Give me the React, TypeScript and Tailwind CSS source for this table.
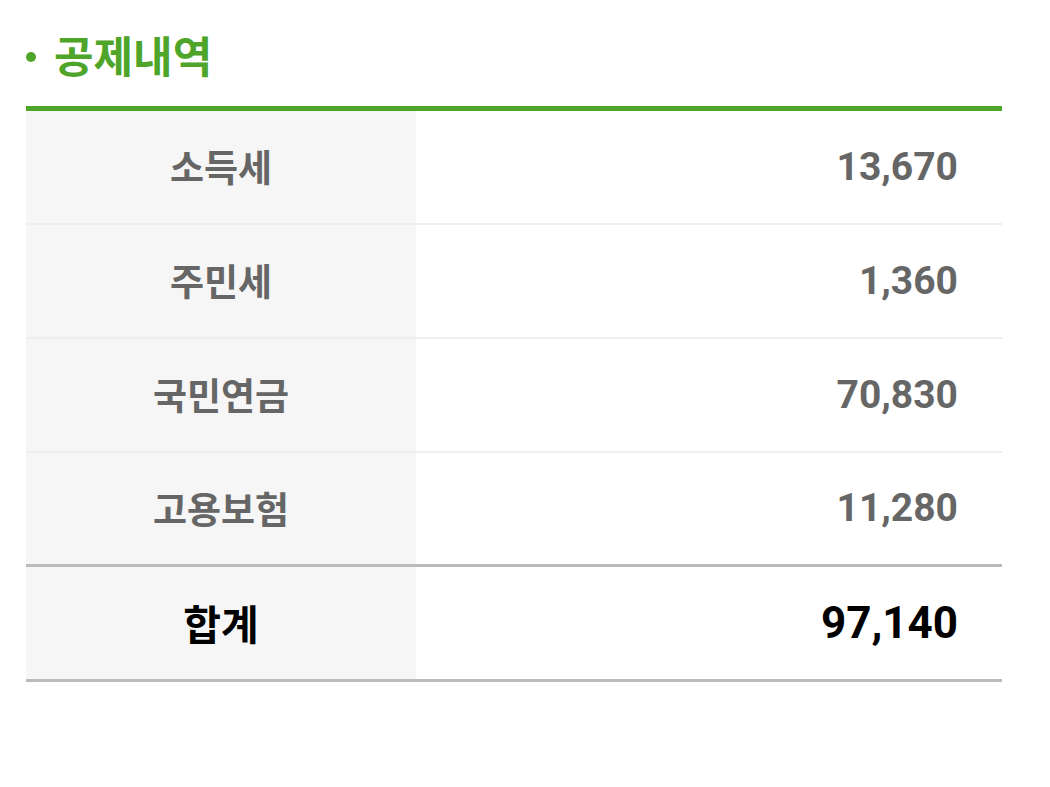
import React from "react";

const rows = [
  { label: "소득세", value: "13,670" },
  { label: "주민세", value: "1,360" },
  { label: "국민연금", value: "70,830" },
  { label: "고용보험", value: "11,280" },
];

const num = { fontFamily: 'Roboto, "Noto Sans", sans-serif' };

export default function App() {
  return (
    <div
      className="w-[1050px] h-[787px] bg-white"
      style={{ fontFamily: '"Noto Sans CJK KR", "Noto Sans", sans-serif' }}
    >
      <div className="pl-[26px] pr-[48px] pt-[26px]">
        <div className="flex items-center h-[56px]">
          <span className="w-[10px] h-[10px] rounded-full bg-[#4ea52a] mr-[18px] mt-[6px]" />
          <span className="text-[43px] font-bold text-[#4ea52a] leading-none">공제내역</span>
        </div>
        <div className="mt-[24px] border-t-[5px] border-[#4ea52a]">
          {rows.map((r, i) => (
            <div
              key={r.label}
              className={`flex h-[114px] ${i < rows.length - 1 ? "border-b-2 border-[#eeeeee]" : "border-b-[3px] border-[#bbbbbb]"}`}
            >
              <div className="w-[390px] bg-[#f6f6f6] flex items-center justify-center text-[37px] font-bold text-[#666666]">
                {r.label}
              </div>
              <div
                className="flex-1 flex items-center justify-end pr-[44px] text-[39px] font-bold text-[#666666]"
                style={num}
              >
                {r.value}
              </div>
            </div>
          ))}
          <div className="flex h-[115px] border-b-[3px] border-[#bbbbbb]">
            <div className="w-[390px] bg-[#f6f6f6] flex items-center justify-center text-[41px] font-bold text-black">
              합계
            </div>
            <div
              className="flex-1 flex items-center justify-end pr-[44px] text-[44px] font-bold text-black"
              style={num}
            >
              97,140
            </div>
          </div>
        </div>
      </div>
    </div>
  );
}
